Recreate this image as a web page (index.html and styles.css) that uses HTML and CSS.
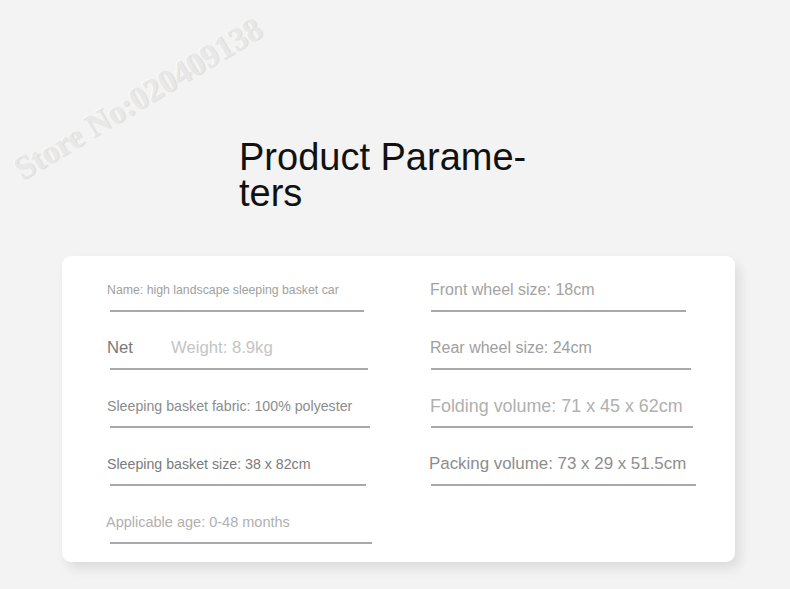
FILE: index.html
```html
<!DOCTYPE html>
<html lang="en">
<head>
<meta charset="utf-8">
<title>Product Parameters</title>
<link rel="stylesheet" href="styles.css">
</head>
<body>
<div class="page">
  <div class="watermark">Store No:020409138</div>
  <h1 class="title">Product Parame-<br>ters</h1>
  <section class="card">
    <div class="col col-left">
      <div class="item">
        <div class="txt t-name">Name: high landscape sleeping basket car</div>
        <div class="rule w254"></div>
      </div>
      <div class="item">
        <div class="txt t-net"><span class="net">Net</span><span class="weight">Weight: 8.9kg</span></div>
        <div class="rule w258"></div>
      </div>
      <div class="item">
        <div class="txt t-fabric">Sleeping basket fabric: 100% polyester</div>
        <div class="rule w260"></div>
      </div>
      <div class="item">
        <div class="txt t-size">Sleeping basket size: 38 x 82cm</div>
        <div class="rule w256"></div>
      </div>
      <div class="item">
        <div class="txt t-age">Applicable age: 0-48 months</div>
        <div class="rule w262"></div>
      </div>
    </div>
    <div class="col col-right">
      <div class="item">
        <div class="txt t-front">Front wheel size: 18cm</div>
        <div class="rule w255"></div>
      </div>
      <div class="item">
        <div class="txt t-rear">Rear wheel size: 24cm</div>
        <div class="rule w260"></div>
      </div>
      <div class="item">
        <div class="txt t-fold">Folding volume: 71 x 45 x 62cm</div>
        <div class="rule w262"></div>
      </div>
      <div class="item">
        <div class="txt t-pack">Packing volume: 73 x 29 x 51.5cm</div>
        <div class="rule w265"></div>
      </div>
    </div>
  </section>
</div>
</body>
</html>
```

FILE: styles.css
```css
html, body {
  margin: 0;
  padding: 0;
}
body {
  background: #f3f3f3;
  font-family: "Liberation Sans", Arial, sans-serif;
  width: 790px;
  height: 589px;
  overflow: hidden;
}
.page {
  position: relative;
  padding-top: 139px;
}
.watermark {
  position: absolute;
  left: 138px;
  top: 99px;
  transform: translate(-50%, -50%) rotate(-31deg);
  font-family: "Liberation Serif", "Times New Roman", serif;
  font-weight: bold;
  font-size: 33px;
  line-height: 33px;
  white-space: nowrap;
  color: #e8e8e8;
  text-shadow: 1px 1px 1px rgba(0,0,0,0.10), -1px -1px 0 rgba(255,255,255,0.6);
}
.title {
  margin: 0 0 0 239px;
  font-weight: normal;
  font-size: 38px;
  line-height: 36px;
  color: #111;
}
.card {
  margin: 45px 0 0 62px;
  width: 673px;
  height: 306px;
  box-sizing: border-box;
  background: #fff;
  border-radius: 9px;
  box-shadow: 5px 7px 12px rgba(0,0,0,0.09);
  padding: 24px 0 0 45px;
  display: grid;
  grid-template-columns: 323px 1fr;
}
.col {
  display: flex;
  flex-direction: column;
  gap: 26px;
}
.item {
  display: flex;
  flex-direction: column;
  gap: 10px;
}
.txt {
  height: 20px;
  line-height: 20px;
  white-space: nowrap;
}
.rule {
  height: 2px;
  background: #a9a9a9;
  margin-left: 3px;
}
.col-right .rule { margin-left: 1px; }
.w254 { width: 254px; }
.w255 { width: 255px; }
.w256 { width: 256px; }
.w258 { width: 258px; }
.w260 { width: 260px; }
.w262 { width: 262px; }
.w265 { width: 265px; }

.t-name { font-size: 12.3px; color: #a0a0a0; }
.t-net { font-size: 16.7px; }
.net { color: #7a7a7a; display: inline-block; width: 64px; }
.weight { color: #c4c4c4; }
.t-fabric { font-size: 14.2px; color: #8c8c8c; }
.t-size { font-size: 14.2px; color: #7b7b7b; }
.t-age { font-size: 14.5px; color: #b0b0b0; margin-left: -1px; }
.t-front { font-size: 16px; color: #a3a3a3; }
.t-rear { font-size: 16px; color: #a0a0a0; }
.t-fold { font-size: 17.9px; color: #b0b0b0; }
.t-pack { font-size: 16.9px; color: #8d8d8d; margin-left: -1px; }
```
